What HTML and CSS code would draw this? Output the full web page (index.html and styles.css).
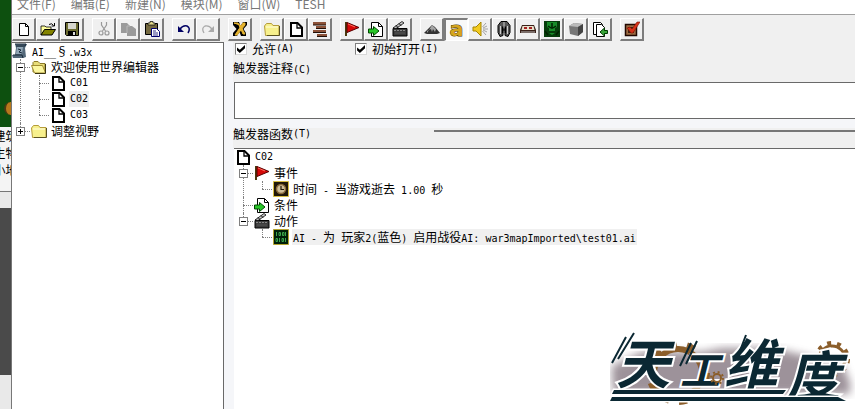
FILE: index.html
```html
<!DOCTYPE html>
<html lang="zh-CN">
<head>
  <meta charset="UTF-8" />
  <meta name="viewport" content="width=device-width, initial-scale=1.0"/>
  <title>触发器编辑器</title>
  <link rel="stylesheet" href="styles.css">
</head>
<body>
  <svg class="sprite" width="0" height="0" aria-hidden="true">
    <symbol id="i-new" viewBox="0 0 16 16"><path d="M3.5 2.500h6l3 3v9h-9z" fill="#fff" stroke="#000"/><path d="M9.500 2.500v3h3" fill="none" stroke="#000"/></symbol>
    <symbol id="i-open" viewBox="0 0 16 16"><path d="M1 5h4l1 1h5v3H5l-4 5z" fill="#ffff9c" stroke="#000" stroke-width=".8"/><path d="M1 14l3.500-5.500H15.500L12 14z" fill="#848400" stroke="#000"/><path d="M9 3.500q3-2 4.500 1M14.500 2v3h-3" fill="none" stroke="#000"/></symbol>
    <symbol id="i-save" viewBox="0 0 16 16"><path d="M1.500 1.500h13v13h-12l-1-1z" fill="#6b6b31" stroke="#000"/><path d="M4 2h8v6H4z" fill="#d6d6ce"/><path d="M4 10h8v4H4z" fill="#000"/><path d="M9 11h2v3H9z" fill="#ddd"/></symbol>
    <symbol id="i-cut" viewBox="0 0 16 16"><path d="M5.500 1v3l4 6M10.500 1v3l-4 6" fill="none" stroke="#999" stroke-width="1.200"/><circle cx="5" cy="12" r="2" fill="none" stroke="#999" stroke-width="1.200"/><circle cx="11" cy="12" r="2" fill="none" stroke="#999" stroke-width="1.200"/></symbol>
    <symbol id="i-copy" viewBox="0 0 16 16"><path d="M1 2h6l3 3h2l4 3v7H7v-3H1z" fill="#9a9a9a"/><path d="M7 12V5h3" fill="none" stroke="#b8b8b8"/></symbol>
    <symbol id="i-paste" viewBox="0 0 16 16"><path d="M1.500 2.500h12v11h-12z" fill="#73683f" stroke="#000"/><path d="M4 4V2h2V.500h3V2h2v2z" fill="#e6dc8c" stroke="#000" stroke-width=".7"/><path d="M7.500 7.500h5l3 3v5h-8z" fill="#fff" stroke="#00006b"/><path d="M9 10h3M9 12h5M9 14h5" stroke="#00006b" stroke-width=".8"/></symbol>
    <symbol id="i-undo" viewBox="0 0 16 16"><path d="M4 8q3-4 7-3 4 2 1 7" fill="none" stroke="#000063" stroke-width="1.500"/><path d="M2 5v6h6z" fill="#000063"/></symbol>
    <symbol id="i-redo" viewBox="0 0 16 16"><path d="M12 8Q9 4 5 5q-4 2-1 7" fill="none" stroke="#aaa" stroke-width="1.300"/><path d="M14 5v6H8z" fill="#aaa"/></symbol>
    <symbol id="i-x" viewBox="0 0 16 16"><path d="M1 1h6l1.500 4L11 1h4v3l-3.500 4L14 12v3H9l-1.500-4L5 15H1v-3l3.500-4L1 4z" fill="#000"/><path d="M2 2h4l5 11h2L8 4zM13 2h-2L3 14h2l8-10z" fill="#e7b531" stroke="#e7b531"/></symbol>
    <symbol id="i-folder" viewBox="0 0 16 16"><path d="M.500 5l2-2.500h5l1.500 2h6v10H1.500z" fill="#f7f08c" stroke="#b59c3a"/><path d="M2 6h12" stroke="#fffde0"/><path d="M15.500 5v9.500H3" fill="none" stroke="#5a5220"/></symbol>
    <symbol id="i-folder-open" viewBox="0 0 16 16"><path d="M2 13V3.500l1-1h4l2 2h5v9z" fill="#e7dc78" stroke="#8c7a29"/><path d="M.500 6.500h11l3 7.500H3.500z" fill="#fbf6a0" stroke="#a08c31"/><path d="M14.500 5v9.500H4" fill="none" stroke="#3a3410"/></symbol>
    <symbol id="i-page" viewBox="0 0 16 16"><path d="M3 2h6.500L14 6.500V15H3z" fill="#fff" stroke="#000" stroke-width="2"/><path d="M9 2v5h5" fill="none" stroke="#000" stroke-width="1.300"/></symbol>
    <symbol id="i-lines" viewBox="0 0 16 16"><path d="M1 1h13v3H1zM4 5h10v2H4zM1 9h13v2H1zM5 13h10v2H5z" fill="#8c5239"/><path d="M1 4h13M4 7.500h10M1 11.500h13M5 15.500h10" stroke="#211008"/></symbol>
    <symbol id="i-flag" viewBox="0 0 16 16"><path d="M2 1v14" stroke="#4a3a10" stroke-width="2"/><path d="M3 1.500l12 5-12 5z" fill="#d60808" stroke="#5a0000"/><path d="M4 3l7 3" stroke="#ff6b5a"/></symbol>
    <symbol id="i-cond" viewBox="0 0 16 16"><path d="M3.500 1.500h7l4 4v10h-11z" fill="#fff" stroke="#000"/><path d="M10.500 1.500v4h4" fill="none" stroke="#000"/><path d="M.500 8h5V5.500L11 10l-5.500 4.500V12h-5z" fill="#29c629" stroke="#004a00"/></symbol>
    <symbol id="i-act" viewBox="0 0 16 16"><path d="M1 7.500h14V15H1z" fill="#3c3c3c" stroke="#000"/><path d="M1 7L10 .500l2 1.500-8 5.500z" fill="#ccc" stroke="#000" stroke-width=".8"/><path d="M4 4.500l2 2M7 2.500l2 2" stroke="#000"/><path d="M2 9.500h12" stroke="#888" stroke-dasharray="2 1"/><path d="M3 12h10" stroke="#555"/></symbol>
    <symbol id="i-hill" viewBox="0 0 16 16"><path d="M0 12l5-5 3-3 3 2 5 6-3 1H3z" fill="#333"/><path d="M8 4L5 9l2-1 1 3 1-3 2 3 1-3zM3 10l2-1-2 3z" fill="#a5a5a5"/></symbol>
    <symbol id="i-sound" viewBox="0 0 16 16"><path d="M1 6h3l5-5v14l-5-5H1z" fill="#f2cb21" stroke="#a58400"/><path d="M10.500 6L14 2M11 8h5M10.500 10l3.500 4M11 7l4-2M11 9l4 2" stroke="#999" stroke-width=".9"/></symbol>
    <symbol id="i-helm" viewBox="0 0 16 16"><path d="M5 .500h6l3 4v7l-2 4-3-1V9H7v5.500l-3 1-2-4v-7z" fill="#555" stroke="#000"/><path d="M8 1v6M4.500 5v8M11.500 5v8" stroke="#ccc"/><path d="M6 5.500h1.300V12H6zM8.700 5.500H10V12H8.700z" fill="#000"/></symbol>
    <symbol id="i-med" viewBox="0 0 16 16"><path d="M2 4h12l2 5v3H0V9z" fill="#3a2118"/><path d="M2.500 5h11l1 4h-13z" fill="#e8e0cc"/><path d="M4 6h3v2H4zM9 6h3v2H9z" fill="#a52121"/><path d="M1 11h14" stroke="#bbb"/></symbol>
    <symbol id="i-face" viewBox="0 0 16 16"><path d="M0 0h16v16H0z" fill="#063d0b"/><path d="M3 1h10v5l-2 1v5l-3 2-3-2V7L3 6z" fill="#188c29"/><path d="M4 5l3 2M12 5L9 7M5 11h6M1 10l3 4M15 10l-3 4M8 2v6" stroke="#002100" stroke-width="1.500"/></symbol>
    <symbol id="i-cube" viewBox="0 0 16 16"><path d="M1 5l5-3 9 1v8l-5 4-8-2z" fill="#777"/><path d="M1 5l5-3 9 1-5 3z" fill="#bbb"/><path d="M10 6l5-3v8l-5 4z" fill="#444"/></symbol>
    <symbol id="i-export" viewBox="0 0 16 16"><path d="M1.500 1.500h7l2 2v10h-9z" fill="#fff" stroke="#000"/><path d="M4.500 3.500h5l3 3v9h-8z" fill="#fff" stroke="#000"/><path d="M15.500 9.500h-3V7L8 11l4.500 4v-2.500h3z" fill="#39a539" stroke="#003900"/></symbol>
    <symbol id="i-check" viewBox="0 0 16 16"><path d="M1.500 3.500h11v11h-11z" fill="#9c6b42" stroke="#210800" stroke-width="1.500"/><path d="M4 6h6v6H4z" fill="#402010"/><path d="M3 7l3-1 2 2 5-7h3L9 12H7z" fill="#d63118" stroke="#7b1000" stroke-width=".6"/></symbol>
    <symbol id="i-map" viewBox="0 0 16 16"><path d="M3 1h12l-2 4 1 9-3 1H1l-1-3h3l1-7z" fill="#536879"/><path d="M5 4h6l-1 7H4z" fill="#91a6b5"/><path d="M3 1h11l-1 2H4M1 12h9l1 3M6 6l3 1-2 2 3 1" fill="none" stroke="#182838"/></symbol>
    <symbol id="i-clock" viewBox="0 0 16 16"><path d="M.500.500h15v15H.500z" fill="#211808" stroke="#d6bd42"/><circle cx="8" cy="8" r="4.500" fill="#d0bf98" stroke="#8b6b3b" stroke-width="1.500"/><path d="M8 5v3.500h3" fill="none" stroke="#211808" stroke-width="1.200"/></symbol>
    <symbol id="i-ai" viewBox="0 0 16 16"><path d="M.500.500h15v15H.500z" fill="#001f08" stroke="#b5a531"/><path d="M3.500 3v4M12.500 3v4M6 3.500h1.500v3H6zM9.500 3.500H11v3H9.500zM6.500 9v4M12.500 9v4M3 9.500h1.500v3H3zM9 9.500h1.500v3H9z" fill="none" stroke="#42b552" stroke-width=".9"/></symbol>
  </svg>

  <aside class="backdrop">
    <div class="terrain"><i></i></div>
    <div class="info"><span>建筑</span><span>生物</span><span>小地</span></div>
    <div class="status"></div>
    <div class="dark"></div>
  </aside>

  <div class="window">
    <nav class="menubar">
      <a href="#">文件(F)</a>
      <a href="#">编辑(E)</a>
      <a href="#">新建(N)</a>
      <a href="#">模块(M)</a>
      <a href="#">窗口(W)</a>
      <a href="#">TESH</a>
    </nav>

    <div class="toolbar">
      <div class="group">
        <button aria-label="新建"><svg><use href="#i-new"/></svg></button>
        <button aria-label="打开"><svg><use href="#i-open"/></svg></button>
        <button aria-label="保存"><svg><use href="#i-save"/></svg></button>
      </div>
      <div class="group">
        <button aria-label="剪切"><svg><use href="#i-cut"/></svg></button>
        <button aria-label="复制"><svg><use href="#i-copy"/></svg></button>
        <button aria-label="粘贴"><svg><use href="#i-paste"/></svg></button>
      </div>
      <div class="group">
        <button aria-label="撤销"><svg><use href="#i-undo"/></svg></button>
        <button aria-label="重做"><svg><use href="#i-redo"/></svg></button>
      </div>
      <div class="group">
        <button aria-label="变量"><svg><use href="#i-x"/></svg></button>
      </div>
      <div class="group">
        <button aria-label="新建类别"><svg><use href="#i-folder"/></svg></button>
        <button aria-label="新建触发器"><svg><use href="#i-page"/></svg></button>
        <button aria-label="新建注释"><svg><use href="#i-lines"/></svg></button>
      </div>
      <div class="group">
        <button aria-label="新建事件"><svg><use href="#i-flag"/></svg></button>
        <button aria-label="新建条件"><svg><use href="#i-cond"/></svg></button>
        <button aria-label="新建动作"><svg><use href="#i-act"/></svg></button>
      </div>
      <div class="group">
        <button aria-label="地形"><svg><use href="#i-hill"/></svg></button>
        <button class="pressed" aria-label="触发器">a</button>
        <button aria-label="声音"><svg><use href="#i-sound"/></svg></button>
        <button aria-label="物体"><svg><use href="#i-helm"/></svg></button>
        <button aria-label="战役"><svg><use href="#i-med"/></svg></button>
        <button aria-label="AI"><svg><use href="#i-face"/></svg></button>
        <button aria-label="物体管理"><svg><use href="#i-cube"/></svg></button>
        <button aria-label="输入"><svg><use href="#i-export"/></svg></button>
      </div>
      <div class="group">
        <button aria-label="测试地图"><svg><use href="#i-check"/></svg></button>
      </div>
    </div>

    <div class="panes">
      <div class="sidebar">
        <ul class="tree">
          <li>
            <div class="row"><svg><use href="#i-map"/></svg><span class="name"><span class="en">AI__</span><span class="wide">§</span><span class="en">.w3x</span></span></div>
            <ul>
              <li>
                <button class="toggle" aria-label="折叠"></button>
                <div class="row"><svg><use href="#i-folder-open"/></svg><span class="name">欢迎使用世界编辑器</span></div>
                <ul>
                  <li><div class="row"><svg><use href="#i-page"/></svg><span class="name en">C01</span></div></li>
                  <li><div class="row"><svg><use href="#i-page"/></svg><span class="name en selected">C02</span></div></li>
                  <li><div class="row"><svg><use href="#i-page"/></svg><span class="name en">C03</span></div></li>
                </ul>
              </li>
              <li>
                <button class="toggle closed" aria-label="展开"></button>
                <div class="row"><svg><use href="#i-folder"/></svg><span class="name">调整视野</span></div>
              </li>
            </ul>
          </li>
        </ul>
      </div>

      <main class="detail">
        <div class="options">
          <label><input type="checkbox" checked>允许<span class="en">(A)</span></label>
          <label><input type="checkbox" checked>初始打开<span class="en">(I)</span></label>
        </div>
        <label class="caption" for="comment">触发器注释<span class="en">(C)</span></label>
        <textarea id="comment"></textarea>
        <div class="caption functions">触发器函数<span class="en">(T)</span></div>
        <div class="script">
          <ul class="tree">
            <li>
              <div class="row"><svg><use href="#i-page"/></svg><span class="name en">C02</span></div>
              <ul>
                <li>
                  <button class="toggle" aria-label="折叠"></button>
                  <div class="row"><svg><use href="#i-flag"/></svg><span class="name">事件</span></div>
                  <ul>
                    <li><div class="row"><svg><use href="#i-clock"/></svg><span class="name">时间<span class="en"> - </span>当游戏逝去<span class="en"> 1.00 </span>秒</span></div></li>
                  </ul>
                </li>
                <li>
                  <div class="row"><svg><use href="#i-cond"/></svg><span class="name">条件</span></div>
                </li>
                <li>
                  <button class="toggle" aria-label="折叠"></button>
                  <div class="row"><svg><use href="#i-act"/></svg><span class="name">动作</span></div>
                  <ul>
                    <li><div class="row"><svg><use href="#i-ai"/></svg><span class="name selected"><span class="en">AI - </span>为<span class="en"> </span>玩家<span class="en">2(</span>蓝色<span class="en">) </span>启用战役<span class="en">AI: war3mapImported\test01.ai</span></span></div></li>
                  </ul>
                </li>
              </ul>
            </li>
          </ul>
        </div>
      </main>
    </div>
  </div>

  <svg class="watermark" viewBox="0 0 245 76" role="img" aria-label="天工维度">
    <defs>
      <filter id="haze"><feGaussianBlur stdDeviation="4"/></filter>
    </defs>
    <path d="M2 46V34l30-14h60l20-4h50l70 16 8 18v12H4z" fill="#75656f" filter="url(#haze)" opacity=".7"/>
    <g fill="none" stroke="#8b5e2b">
      <circle cx="68" cy="41" r="24" stroke-width="6"/>
      <circle cx="68" cy="41" r="29" stroke-width="6" stroke-dasharray="8 10.200"/>
      <circle cx="222" cy="27" r="13" stroke-width="3"/>
      <circle cx="222" cy="27" r="16" stroke-width="4" stroke-dasharray="4 6"/>
    </g>
    <g class="letters">
      <text x="6" y="52" font-size="54">天</text>
      <text x="70" y="53" font-size="40">工</text>
      <text x="114" y="52" font-size="54">维</text>
      <text x="176" y="64" font-size="54">度</text>
    </g>
    <g fill="none" stroke="#8b5e2b" stroke-width="2">
      <circle cx="107" cy="46" r="4"/>
      <circle cx="107" cy="46" r="6" stroke-dasharray="2 2.700"/>
    </g>
    <path d="M2 31L16 5M8 27L24 1M70 34l11-23M76 32l11-23M128 24l8-21" stroke="#0b2833" stroke-width="2"/>
    <path d="M4 58h172l-3 4H2zM2 65h226l8 4H0z" fill="#0b2833" stroke="#fff" stroke-width="3" paint-order="stroke"/>
  </svg>
</body>
</html>
```
FILE: styles.css
```css
* {
  box-sizing: border-box;
}

body {
  margin: 0;
  min-height: 100vh;
  display: flex;
  position: relative;
  overflow: hidden;
  background: #fff;
  color: #000;
  font-family: "Noto Sans CJK SC", sans-serif;
  font-size: 12px;
  line-height: 16px;
}

.sprite {
  position: absolute;
}

.en {
  font-family: "DejaVu Sans Mono", monospace;
  font-size: 10px;
  white-space: pre;
}

.wide {
  display: inline-block;
  width: 12px;
  text-align: center;
}

/* main editor window peeking out behind */
.backdrop {
  width: 12px;
  flex: none;
  display: flex;
  flex-direction: column;
  overflow: hidden;
  background: #e9e9e9;
  border-right: 1px solid #777;
}

.terrain {
  height: 127px;
  background: #0d500f;
  display: flex;
  align-items: flex-end;
  justify-content: flex-end;
  padding-bottom: 12px;
}

.terrain i {
  width: 7px;
  height: 13px;
  background: #b8791c;
  border-radius: 7px 0 0 7px;
  border-left: 2px solid #4b3a12;
}

.info {
  height: 65px;
  display: flex;
  flex-direction: column;
  align-items: center;
  background: #f4f4f4;
  border-bottom: 1px solid #777;
  white-space: nowrap;
}

.info span {
  line-height: 17px;
}

.status {
  height: 16px;
}

.dark {
  height: 167px;
  background: #4a4a4a;
}

.window {
  flex: 1;
  min-width: 0;
  display: flex;
  flex-direction: column;
}

.menubar {
  height: 14px;
  display: flex;
  gap: 15px;
  padding-left: 5px;
  overflow: hidden;
  line-height: 8px;
}

.menubar a {
  color: #777;
  text-decoration: none;
}

.toolbar {
  display: flex;
  gap: 8px;
  padding: 3px 0 1px;
  background: #f0f0f0;
  border-top: 1px solid #a0a0a0;
}

.group {
  display: flex;
}

.group button {
  width: 24px;
  height: 23px;
  padding: 0;
  display: flex;
  align-items: center;
  justify-content: center;
  background: #f0f0f0;
  border: 1px solid #fff;
  border-right: 2px solid #7d7d7d;
  border-bottom: 2px solid #7d7d7d;
}

.group button.pressed {
  background: #f8f8f8;
  border: 1px solid #fff;
  border-top: 2px solid #7d7d7d;
  border-left: 2px solid #7d7d7d;
  padding-bottom: 3px;
  color: #d6a51c;
  font: bold 20px/16px "DejaVu Sans", sans-serif;
  -webkit-text-stroke: 1px #4a3500;
  paint-order: stroke;
}

.group svg,
.row svg {
  width: 16px;
  height: 16px;
  flex: none;
}

.panes {
  flex: 1;
  display: flex;
  background: #f5f6f9;
}

.sidebar {
  width: 212px;
  flex: none;
  background: #fff;
  border-top: 1px solid #696969;
  border-right: 1px solid #696969;
}

/* tree */
.tree,
.tree ul {
  list-style: none;
  margin: 0;
  padding: 0;
}

.tree ul li {
  position: relative;
  padding-left: 19px;
}

.tree ul li::before {
  content: "";
  position: absolute;
  left: 8px;
  top: 0;
  bottom: 0;
  border-left: 1px dotted #808080;
}

.tree ul li:last-child::before {
  bottom: auto;
  height: 8px;
}

.tree ul li::after {
  content: "";
  position: absolute;
  left: 8px;
  top: 8px;
  width: 10px;
  border-top: 1px dotted #808080;
}

.row {
  display: flex;
  height: 16px;
  gap: 3px;
  white-space: nowrap;
}

.name {
  padding: 0 1px;
}

.selected {
  background: #f0f0f0;
}

.toggle {
  position: absolute;
  z-index: 1;
  left: 4px;
  top: 4px;
  width: 9px;
  height: 9px;
  padding: 0;
  border: 1px solid #808080;
  background: linear-gradient(#000, #000) center / 5px 1px no-repeat #fff;
}

.toggle.closed {
  background:
    linear-gradient(#000, #000) center / 5px 1px no-repeat,
    linear-gradient(#000, #000) center / 1px 5px no-repeat #fff;
}

/* right side */
.detail {
  flex: 1;
  min-width: 0;
  display: flex;
  flex-direction: column;
  padding-left: 9px;
}

.options {
  display: flex;
  gap: 61px;
  padding: 0 2px;
  height: 14px;
  background: #f0f0f0;
}

.options label {
  display: flex;
  align-items: center;
}

.options input {
  appearance: none;
  width: 12px;
  height: 12px;
  margin: 0 5px 0 0;
  background: #fff;
  border: 1px solid #d8d8d8;
  border-top-color: #808080;
  border-left-color: #808080;
}

.options input:checked::before {
  content: "";
  display: block;
  width: 8px;
  height: 8px;
  margin: 1px;
  background: #000;
  clip-path: polygon(0 30%, 35% 60%, 100% 0, 100% 40%, 35% 100%, 0 70%);
}

.caption {
  height: 26px;
  line-height: 24px;
  background: #f0f0f0;
}

textarea {
  height: 37px;
  margin: 0 0 9px 1px;
  resize: none;
  background: #fff;
  border: 1px solid #696969;
  border-right: none;
  font: inherit;
}

.functions {
  height: 20px;
  line-height: 12px;
  display: flex;
}

.functions::after {
  content: "";
  flex: 1;
  height: 2px;
  margin: 2px 0 0 123px;
  background: #777;
}

.script {
  flex: 1;
  margin-left: 1px;
  padding-left: 1px;
  background: #fff;
  border-top: 1px solid #696969;
}

/* site logo laid over the lower right corner */
.watermark {
  position: absolute;
  right: 0;
  bottom: 1px;
  width: 245px;
  height: 76px;
}

.letters text {
  font-family: "Noto Sans CJK SC", sans-serif;
  font-weight: 700;
  font-style: italic;
  fill: #0b2833;
  stroke: #fff;
  stroke-width: 4px;
  paint-order: stroke;
}
```
